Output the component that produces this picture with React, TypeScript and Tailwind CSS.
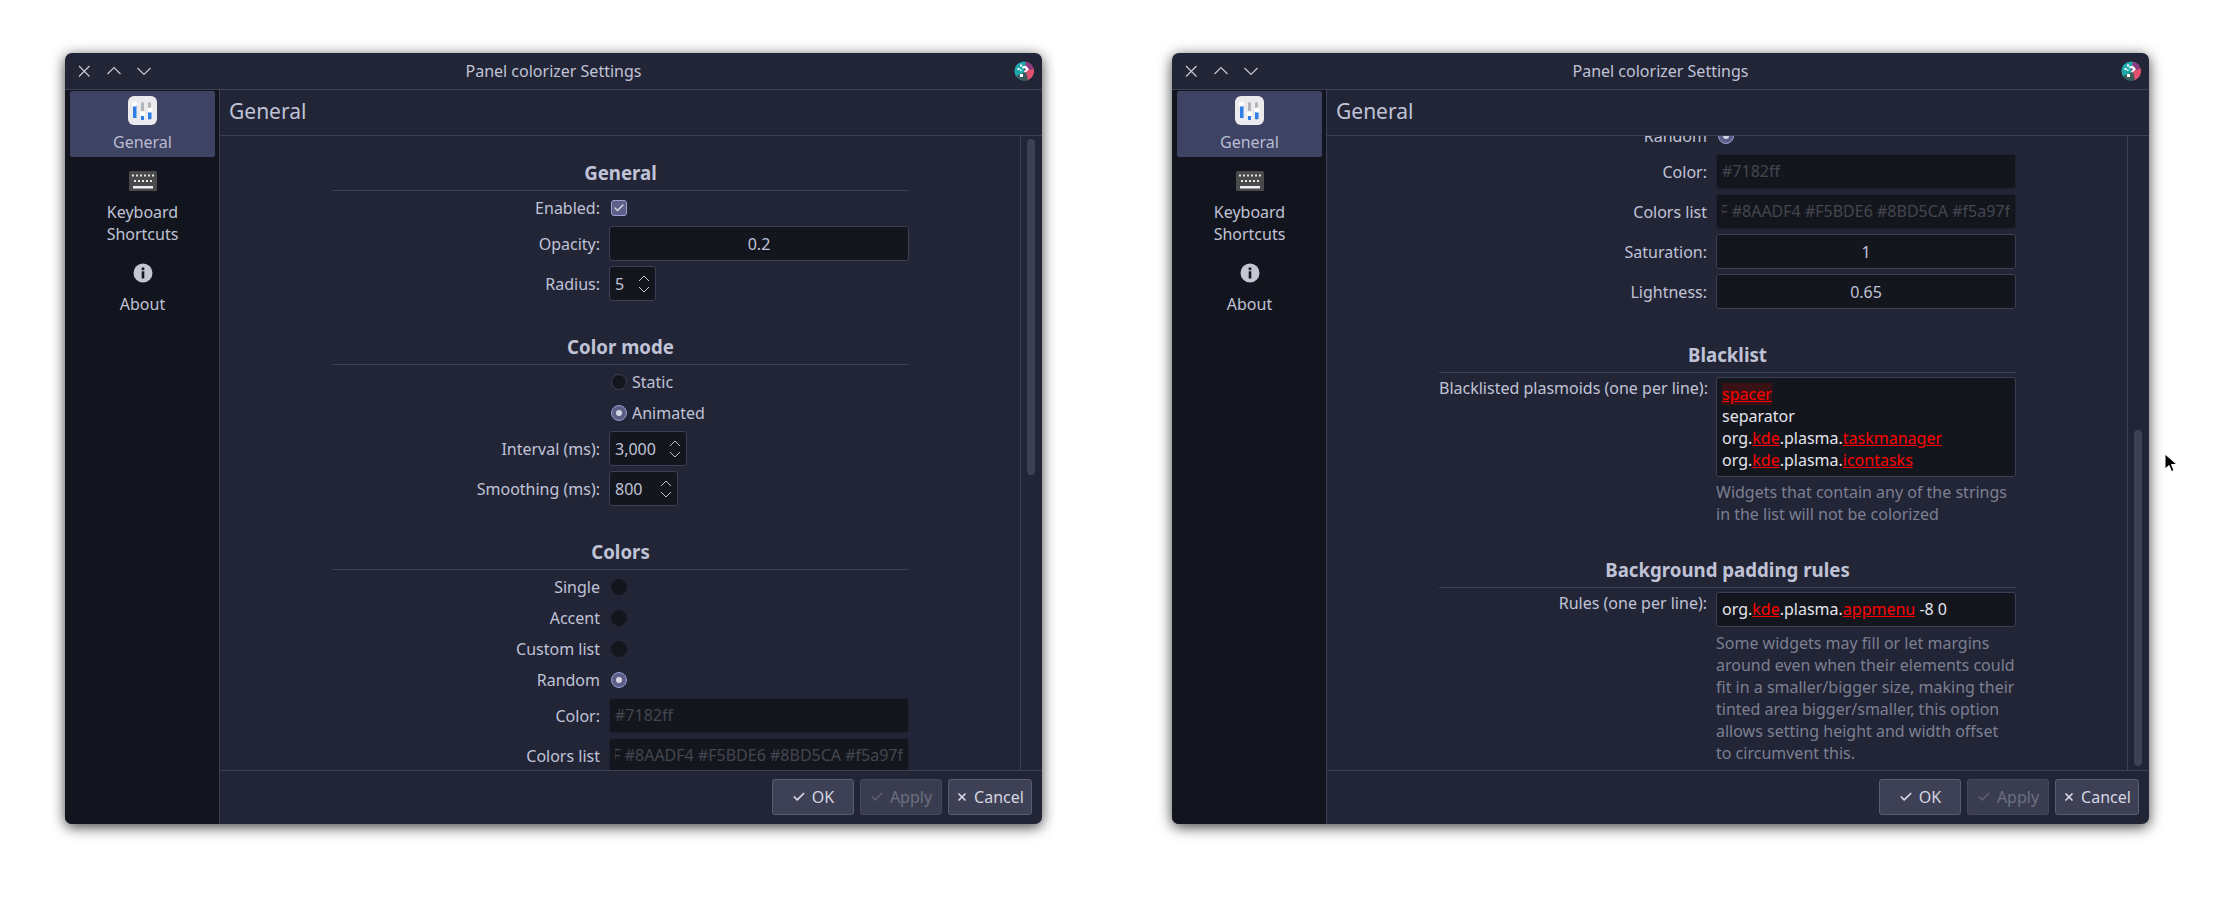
import React from 'react';
import { Check, X } from 'lucide-react';

const FONT = "font-['Noto_Sans',sans-serif]";

function TitleIcons() {
  return (
    <div className="flex items-center gap-[14px] text-[#c6c8d6]">
      <svg width="16" height="16" viewBox="0 0 16 16" fill="none" stroke="currentColor" strokeWidth="1.2"><path d="M3 3l10.5 10.5M13.5 3L3 13.5" /></svg>
      <svg width="16" height="16" viewBox="0 0 16 16" fill="none" stroke="currentColor" strokeWidth="1.2"><path d="M1.5 11L8 4.5l6.5 6.5" /></svg>
      <svg width="16" height="16" viewBox="0 0 16 16" fill="none" stroke="currentColor" strokeWidth="1.2"><path d="M1.5 5l6.5 6.5L14.5 5" /></svg>
    </div>
  );
}

function AppLogo() {
  return (
    <svg width="20" height="20" viewBox="0 0 20 20">
      <circle cx="10" cy="10" r="9.6" fill="#1fa9ad" />
      <path d="M10 10L19.6 7A9.6 9.6 0 0 1 12 19.4z" fill="#e3506f" />
      <path d="M12 0.6A9.6 9.6 0 0 1 19.6 8L10 10z" fill="#8b3a7d" />
      <path d="M2 15L12 10.5 14 18.6A9.6 9.6 0 0 1 2 15z" fill="#3e5a5c" />
      <path d="M8 5.5l4-.8 3 3.6-4 3.4-1-1.4 2-1.6-1.2-1.6-2.4.4z" fill="#fff" />
      <rect x="6" y="3.5" width="2" height="2" fill="#fff" />
      <rect x="3.5" y="7" width="2" height="2" fill="#fff" />
      <rect x="6" y="8.5" width="1.5" height="1.5" fill="#fff" />
      <rect x="6" y="13" width="3" height="3" fill="#fff" />
    </svg>
  );
}

function SettingsIcon() {
  return (
    <svg width="29" height="29" viewBox="0 0 29 29">
      <rect width="29" height="29" rx="6" fill="#ebebed" />
      <rect x="13" y="6" width="3" height="18" rx="1.5" fill="#b4b5b9" />
      <rect x="20" y="6" width="3" height="18" rx="1.5" fill="#b4b5b9" />
      <rect x="5" y="7" width="3.5" height="15" fill="#2f7fe6" />
      <rect x="13" y="18" width="3" height="6" fill="#2f7fe6" />
      <rect x="20" y="14" width="3.5" height="9" fill="#2f7fe6" />
      <circle cx="6.5" cy="8" r="2.6" fill="#fff" />
      <circle cx="14.5" cy="17.5" r="2.6" fill="#fff" />
      <circle cx="22" cy="14" r="2.6" fill="#fff" />
    </svg>
  );
}

function KeyboardIcon() {
  const top = [3, 7, 11, 15, 19, 23];
  const mid = [5, 9, 13, 17, 21];
  return (
    <svg width="28" height="20" viewBox="0 0 28 20">
      <rect width="28" height="20" rx="1.5" fill="#4a4a4c" />
      {top.map((x) => <rect key={x} x={x} y="3.5" width="2" height="2" fill="#e6e6e6" />)}
      {mid.map((x) => <rect key={x} x={x} y="9" width="2" height="2" fill="#e6e6e6" />)}
      <rect x="4" y="15" width="20" height="2.5" fill="#f0f0f0" />
    </svg>
  );
}

function InfoIcon() {
  return (
    <svg width="20" height="20" viewBox="0 0 20 20">
      <circle cx="10" cy="10" r="9.5" fill="#c5c6d4" />
      <rect x="8.7" y="8.3" width="2.6" height="7.2" fill="#14161f" />
      <rect x="8.7" y="4.5" width="2.6" height="2.6" fill="#14161f" />
    </svg>
  );
}

function Sidebar() {
  return (
    <div className="w-[155px] shrink-0 bg-[#13151e] border-r border-[#3c3f55] pt-[1px] pl-[5px] pr-[4px] flex flex-col text-[#c0c3d6] text-[16px] leading-[22px] text-center">
      <div className="h-[66px] rounded-[2px] bg-[#3e4263] flex flex-col items-center pt-[5px]">
        <SettingsIcon />
        <span className="mt-[6px] text-[#b9bcd2]">General</span>
      </div>
      <div className="flex flex-col items-center pt-[14px]">
        <KeyboardIcon />
        <span className="mt-[10px] w-[100px]">Keyboard Shortcuts</span>
      </div>
      <div className="flex flex-col items-center pt-[18px]">
        <InfoIcon />
        <span className="mt-[10px]">About</span>
      </div>
    </div>
  );
}

function Heading({ children, className }: { children: React.ReactNode; className: string }) {
  return (
    <div className={`${className} h-[29px] mb-[4px] border-b border-[#3c3f55] text-center font-bold text-[18.67px] leading-[22px] text-[#c0c3d6]`}>
      {children}
    </div>
  );
}

function Row({ label, children, className = '' }: { label?: string; children: React.ReactNode; className?: string }) {
  return (
    <div className={`flex items-center ${className}`}>
      <div className="w-[268px] text-right whitespace-nowrap">{label}</div>
      <div className="ml-[9px] w-[300px]">{children}</div>
    </div>
  );
}

function Field({ value }: { value: string }) {
  return (
    <div className="h-[35px] rounded-[3px] border border-[#3c3f55] bg-[#14161e] text-center leading-[34px]">
      {value}
    </div>
  );
}

function Spin({ value, width }: { value: string; width: string }) {
  return (
    <div className={`${width} h-[35px] rounded-[3px] border border-[#3c3f55] bg-[#14161e] flex items-center justify-between pl-[5px] pr-[5px]`}>
      <span>{value}</span>
      <svg width="12" height="20" viewBox="0 0 12 20" fill="none" stroke="#c0c3d6" strokeWidth="1"><path d="M1 7l5-5 5 5M1 13l5 5 5-5" /></svg>
    </div>
  );
}

function Radio({ on = false, faint = false }: { on?: boolean; faint?: boolean }) {
  return (
    <div className={`ml-[2px] size-[16px] rounded-full border flex items-center justify-center ${on ? 'bg-[#5c5f86] border-[#9a9fd6]' : faint ? 'bg-[#14161e] border-[#14161e]' : 'bg-[#14161e] border-[#3c3f55]'}`}>
      {on && <div className="size-[6px] rounded-full bg-[#d5d6e2]" />}
    </div>
  );
}

function Bad({ children }: { children: React.ReactNode }) {
  return <span className="text-[#ff0000] underline decoration-[#ff0000]">{children}</span>;
}

// the whole form, second window just shows it scrolled down
function Form({ scrollClass }: { scrollClass: string }) {
  return (
    <div className={`${scrollClass} w-[577px] ml-[112px] text-[16px] leading-[22px] text-[#c0c3d6]`}>
      <Heading className="">General</Heading>
      <Row label="Enabled:" className="h-[26px]">
        <div className="ml-[2px] size-[16px] rounded-[3px] border border-[#9a9fd6] bg-[#5c5f86] flex items-center justify-center">
          <Check size={12} strokeWidth={3} className="text-[#d5d6e2]" />
        </div>
      </Row>
      <Row label="Opacity:" className="mt-[5px]"><Field value="0.2" /></Row>
      <Row label="Radius:" className="mt-[5px]"><Spin value="5" width="w-[47px]" /></Row>

      <Heading className="mt-[35px]">Color mode</Heading>
      <Row className="h-[26px]">
        <div className="flex items-center gap-[5px]"><Radio /><span>Static</span></div>
      </Row>
      <Row className="h-[26px] mt-[5px]">
        <div className="flex items-center gap-[5px]"><Radio on /><span>Animated</span></div>
      </Row>
      <Row label="Interval (ms):" className="mt-[5px]"><Spin value="3,000" width="w-[78px]" /></Row>
      <Row label="Smoothing (ms):" className="mt-[5px]"><Spin value="800" width="w-[69px]" /></Row>

      <Heading className="mt-[35px]">Colors</Heading>
      <Row label="Single" className="h-[26px]"><Radio faint /></Row>
      <Row label="Accent" className="h-[26px] mt-[5px]"><Radio faint /></Row>
      <Row label="Custom list" className="h-[26px] mt-[5px]"><Radio faint /></Row>
      <Row label="Random" className="h-[26px] mt-[5px]"><Radio on /></Row>
      <Row label="Color:" className="mt-[5px]">
        <div className="h-[35px] rounded-[3px] border border-[#1d2030] bg-[#14161e] pl-[5px] leading-[33px] text-[#44464f]">#7182ff</div>
      </Row>
      <Row label="Colors list" className="mt-[5px]">
        <div className="h-[35px] rounded-[3px] border border-[#1d2030] bg-[#14161e] px-[5px] leading-[33px] text-[#44464f]">
          <div className="overflow-hidden whitespace-nowrap flex justify-end">
            #ED8796 #A6DA95 #EED49F #8AADF4 #F5BDE6 #8BD5CA #f5a97f
          </div>
        </div>
      </Row>
      <Row label="Saturation:" className="mt-[5px]"><Field value="1" /></Row>
      <Row label="Lightness:" className="mt-[5px]"><Field value="0.65" /></Row>

      <Heading className="mt-[35px]">Blacklist</Heading>
      <div className="flex items-start">
        <div className="w-[268px] text-right whitespace-nowrap">Blacklisted plasmoids (one per line):</div>
        <div className="ml-[9px] w-[300px]">
          <div className="h-[100px] rounded-[3px] border border-[#3c3f55] bg-[#14161e] px-[5px] py-[5px] text-[#e4e5ec]">
            <div><span className="bg-[#3a1216]"><Bad>spacer</Bad></span></div>
            <div>separator</div>
            <div>org.<Bad>kde</Bad>.plasma.<Bad>taskmanager</Bad></div>
            <div>org.<Bad>kde</Bad>.plasma.<Bad>icontasks</Bad></div>
          </div>
          <p className="mt-[4px] text-[#7c7f92]">Widgets that contain any of the strings<br />in the list will not be colorized</p>
        </div>
      </div>

      <Heading className="mt-[34px]">Background padding rules</Heading>
      <div className="flex items-start">
        <div className="w-[268px] text-right whitespace-nowrap">Rules (one per line):</div>
        <div className="ml-[9px] w-[300px]">
          <div className="h-[35px] rounded-[3px] border border-[#3c3f55] bg-[#14161e] pl-[5px] leading-[33px] text-[#e4e5ec]">
            org.<Bad>kde</Bad>.plasma.<Bad>appmenu</Bad> -8 0
          </div>
          <p className="mt-[5px] text-[#7c7f92]">
            Some widgets may fill or let margins<br />
            around even when their elements could<br />
            fit in a smaller/bigger size, making their<br />
            tinted area bigger/smaller, this option<br />
            allows setting height and width offset<br />
            to circumvent this.
          </p>
        </div>
      </div>
    </div>
  );
}

function Footer() {
  const btn = 'h-[36px] rounded-[3px] border flex items-center justify-center gap-[6px]';
  return (
    <div className="h-[54px] border-t border-[#3c3f55] flex items-start justify-end gap-[6px] pt-[8px] pr-[10px] text-[16px]">
      <button className={`${btn} w-[82px] bg-[#3e4155] border-[#5b5e72] text-[#d5d6e2]`}>
        <Check size={14} strokeWidth={3} />OK
      </button>
      <button className={`${btn} w-[82px] bg-[#3a3d50] border-[#45485c] text-[#6d7080]`}>
        <Check size={14} strokeWidth={3} className="text-[#5a5d6c]" />Apply
      </button>
      <button className={`${btn} w-[84px] bg-[#3e4155] border-[#5b5e72] text-[#d5d6e2]`}>
        <X size={12} strokeWidth={3.5} />Cancel
      </button>
    </div>
  );
}

function SettingsWindow({ scrollClass, thumbClass }: { scrollClass: string; thumbClass: string }) {
  return (
    <div className={`${FONT} w-[977px] h-[771px] rounded-[7px] bg-[#222536] flex flex-col overflow-hidden shadow-[0_3px_14px_rgba(0,0,0,0.75)]`}>
      <div className="h-[37px] shrink-0 border-b border-[#3c3f55] flex items-center justify-between pl-[11px] pr-[8px] relative">
        <TitleIcons />
        <span className="absolute inset-x-0 text-center text-[16px] text-[#c0c3d6]">Panel colorizer Settings</span>
        <AppLogo />
      </div>
      <div className="flex flex-1 min-h-0">
        <Sidebar />
        <div className="flex-1 flex flex-col min-w-0">
          <div className="h-[46px] shrink-0 border-b border-[#3c3f55] pl-[9px] pt-[8px] text-[21px] leading-[27px] text-[#c0c3d6]">General</div>
          <div className="flex-1 flex min-h-0">
            <div className="flex-1 overflow-hidden border-r border-[#3c3f55]">
              <Form scrollClass={scrollClass} />
            </div>
            <div className="w-[21px] shrink-0 pl-[6px] pr-[7px] flex flex-col">
              <div className={`${thumbClass} w-[8px] rounded-full bg-[#3e4155]`} />
            </div>
          </div>
          <Footer />
        </div>
      </div>
    </div>
  );
}

export default function App() {
  return (
    <div className="w-[2214px] h-[902px] bg-white flex items-start pl-[65px] pt-[53px] gap-[130px] relative overflow-hidden">
      <SettingsWindow scrollClass="mt-[26px]" thumbClass="mt-[3px] h-[336px]" />
      <SettingsWindow scrollClass="-mt-[518px]" thumbClass="mt-[294px] h-[336px]" />
      <svg className="absolute left-[2164px] top-[453px]" width="14" height="20" viewBox="0 0 14 20">
        <path d="M1 1v15l4-3.5 2.5 6 2.5-1-2.5-6H13z" fill="#000" stroke="#fff" strokeWidth="1" />
      </svg>
    </div>
  );
}
